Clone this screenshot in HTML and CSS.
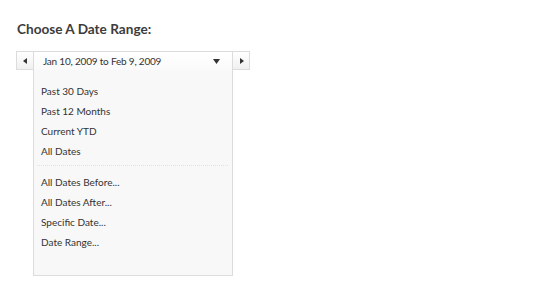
FILE: index.html
```html
<!DOCTYPE html>
<html>
<head>
<meta charset="utf-8">
<link rel="stylesheet" href="styles.css">
</head>
<body>
<div class="page">
  <h1 class="title">Choose A Date Range:</h1>
  <div class="picker">
    <button class="nav nav-prev" aria-label="Previous">
      <svg width="5" height="6" viewBox="0 0 5 6"><path d="M4 0 L0 3 L4 6 Z" fill="#333"/></svg>
    </button>
    <div class="dropdown">
      <div class="dropdown-head">
        <span class="range-text">Jan 10, 2009 to Feb 9, 2009</span>
        <svg class="caret" width="7" height="5" viewBox="0 0 7 5"><path d="M0 0 H7 L3.5 5 Z" fill="#333"/></svg>
      </div>
      <ul class="menu">
        <li class="item">Past 30 Days</li>
        <li class="item">Past 12 Months</li>
        <li class="item">Current YTD</li>
        <li class="item">All Dates</li>
        <li class="sep"></li>
        <li class="item">All Dates Before...</li>
        <li class="item">All Dates After...</li>
        <li class="item">Specific Date...</li>
        <li class="item">Date Range...</li>
      </ul>
    </div>
    <button class="nav nav-next" aria-label="Next">
      <svg width="5" height="6" viewBox="0 0 5 6"><path d="M1 0 L5 3 L1 6 Z" fill="#333"/></svg>
    </button>
  </div>
</div>
</body>
</html>
```

FILE: styles.css
```css
html, body {
  margin: 0;
  padding: 0;
  background: #ffffff;
}
.page {
  padding: 21px 0 0 16px;
  font-family: Lato, "Open Sans", sans-serif;
  color: #333333;
}
.title {
  margin: 0 0 13px 1px;
  font-size: 13.6px;
  font-weight: 700;
  line-height: 17px;
  color: #3c3c3c;
}
.picker {
  display: flex;
  align-items: flex-start;
}
.nav {
  width: 17px;
  height: 19px;
  padding: 0;
  margin: 0;
  border: 1px solid #dcdcdc;
  background: linear-gradient(#ffffff, #f0f0f0);
  display: flex;
  align-items: center;
  justify-content: center;
  box-sizing: border-box;
}
.nav-prev { border-right: none; }
.nav-next { border-left: none; }
.dropdown {
  width: 200px;
  box-sizing: border-box;
  border: 1px solid #dcdcdc;
  background: #f8f8f8;
}
.dropdown-head {
  height: 18px;
  display: flex;
  align-items: center;
  padding: 0 12px 0 9px;
  background: linear-gradient(#ffffff, #fafafa);
}
.range-text {
  flex: 1;
  font-size: 10px;
  letter-spacing: -0.2px;
  color: #333;
}
.caret {
  display: block;
}
.menu {
  list-style: none;
  margin: 0;
  padding: 11px 0 23px 0;
}
.item {
  height: 20px;
  line-height: 20px;
  padding-left: 7px;
  font-size: 10px;
  color: #333;
}
.sep {
  height: 0;
  margin: 4px 4px 6px 3px;
  border-top: 1px dotted #e2e2e2;
}
```
